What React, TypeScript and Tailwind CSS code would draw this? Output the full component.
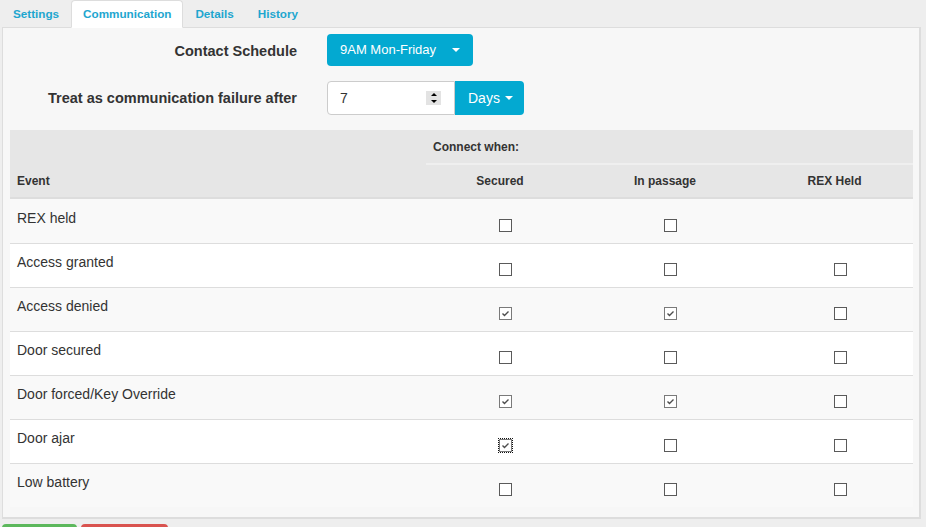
import React from 'react';

type Row = { name: string; values: (boolean | null)[]; focus?: number };

const rows: Row[] = [
  { name: 'REX held', values: [false, false, null] },
  { name: 'Access granted', values: [false, false, false] },
  { name: 'Access denied', values: [true, true, false] },
  { name: 'Door secured', values: [false, false, false] },
  { name: 'Door forced/Key Override', values: [true, true, false] },
  { name: 'Door ajar', values: [true, false, false], focus: 0 },
  { name: 'Low battery', values: [false, false, false] },
];

const Caret = () => (
  <span className="inline-block h-0 w-0 border-x-[4px] border-t-[4px] border-x-transparent border-t-white" />
);

const Box = ({ checked, focus }: { checked: boolean; focus?: boolean }) => (
  <span
    className={`relative inline-flex h-[13px] w-[13px] items-center justify-center border bg-white ${
      checked ? 'border-[#7a7a7a]' : 'border-[#5a5a5a]'
    } ${focus ? 'outline-1 outline-offset-0 outline-dotted outline-[#111]' : ''}`}
  >
    {checked && (
      <svg width="11" height="11" viewBox="0 0 11 11">
        <path d="M2.5 5.5l2 2 4-4" fill="none" stroke="#4d4d4d" strokeWidth="1.4" />
      </svg>
    )}
  </span>
);

const Spinner = () => (
  <span className="flex h-[14px] w-[15px] flex-col justify-between bg-[#e3e3e3] px-[3px] py-[2px]">
    <span className="mx-auto h-0 w-0 border-x-[3.5px] border-b-[3.5px] border-x-transparent border-b-black" />
    <span className="mx-auto h-0 w-0 border-x-[3.5px] border-t-[3.5px] border-x-transparent border-t-black" />
  </span>
);

const tabs = ['Settings', 'Communication', 'Details', 'History'];

export default function App() {
  return (
    <div className="min-h-screen bg-[#eeeeee] font-['Liberation_Sans',Arial,sans-serif] text-[#333]">
      {/* tabs */}
      <div className="flex h-[27px] pl-[1px]">
        {tabs.map((t) => (
          <div
            key={t}
            className={`relative z-10 flex h-[28px] items-center rounded-t-[4px] border px-[11px] text-[11.7px] font-bold text-[#1ea6cf] ${
              t === 'Communication' ? 'border-[#dddddd] border-b-white bg-white' : 'border-transparent'
            }`}
          >
            {t}
          </div>
        ))}
      </div>

      {/* panel */}
      <div className="ml-[2px] w-[919px] border-t border-r-2 border-b-2 border-l border-[#dddddd] bg-[#f7f7f7] pt-[6px] pr-[6px] pb-[10px] pl-[7px]">
        <div className="grid grid-cols-[287px_auto] items-center gap-x-[30px] gap-y-[15px]">
          <div className="pt-[3px] text-right text-[14.5px] font-bold">Contact Schedule</div>
          <div>
            <button className="flex h-[32px] w-[146px] items-center justify-between rounded-[4px] bg-[#03a9d1] pr-[13px] pl-[13px] text-[13px] text-white">
              <span>9AM Mon-Friday</span>
              <Caret />
            </button>
          </div>

          <div className="pt-[2px] text-right text-[14.5px] font-bold">Treat as communication failure after</div>
          <div className="flex h-[34px]">
            <div className="flex w-[128px] items-center justify-between rounded-l-[4px] border border-[#cccccc] bg-white pr-[13px] pl-[12px] text-[14px]">
              <span>7</span>
              <Spinner />
            </div>
            <button className="flex w-[69px] items-center gap-[5px] rounded-r-[4px] bg-[#03a9d1] pl-[13px] text-[14px] text-white">
              <span>Days</span>
              <Caret />
            </button>
          </div>
        </div>

        {/* table */}
        <div className="mt-[15px] w-[903px]">
          <div className="border-b-2 border-[#dddddd] bg-[#e6e6e6] text-[12px] font-bold">
            <div className="grid h-[33px] grid-cols-[416px_487px]">
              <div />
              <div className="flex items-center pl-[7px]">Connect when:</div>
            </div>
            <div className="grid grid-cols-[416px_487px]">
              <div />
              <div className="h-[2px] bg-[#efefef]" />
            </div>
            <div className="grid h-[32px] grid-cols-[416px_148px_182px_157px] items-center">
              <div className="pl-[7px]">Event</div>
              <div className="text-center">Secured</div>
              <div className="text-center">In passage</div>
              <div className="text-center">REX Held</div>
            </div>
          </div>

          {rows.map((r, i) => (
            <div
              key={r.name}
              className={`grid h-[44px] grid-cols-[416px_148px_182px_157px] items-start text-[14px] leading-[20px] ${
                i % 2 === 0 ? 'bg-[#f9f9f9]' : 'bg-white'
              } ${i === 0 ? 'pt-[9px]' : 'border-t border-[#dddddd] pt-[8px]'}`}
            >
              <div className="pl-[7px]">{r.name}</div>
              {r.values.map((v, j) => (
                <div key={j} className="flex justify-center pt-[11px]">
                  {v !== null && (
                    <span className="ml-[11px] flex">
                      <Box checked={v} focus={r.focus === j} />
                    </span>
                  )}
                </div>
              ))}
            </div>
          ))}
        </div>
      </div>

      {/* footer buttons */}
      <div className="mt-[5px] flex gap-[4px] pl-[2px]">
        <button className="h-[34px] w-[75px] rounded-[4px] bg-[#5cb85c]" />
        <button className="h-[34px] w-[87px] rounded-[4px] bg-[#d9534f]" />
      </div>
    </div>
  );
}
